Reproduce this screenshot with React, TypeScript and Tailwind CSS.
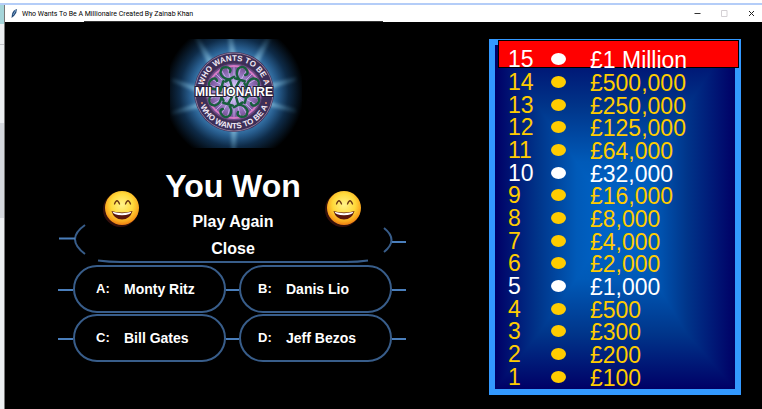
import React from "react";

const prizes = [
  "£1 Million",
  "£500,000",
  "£250,000",
  "£125,000",
  "£64,000",
  "£32,000",
  "£16,000",
  "£8,000",
  "£4,000",
  "£2,000",
  "£1,000",
  "£500",
  "£300",
  "£200",
  "£100",
];

const answers = [
  [
    { letter: "A:", text: "Monty Ritz" },
    { letter: "B:", text: "Danis Lio" },
  ],
  [
    { letter: "C:", text: "Bill Gates" },
    { letter: "D:", text: "Jeff Bezos" },
  ],
];

const petals = [22, 67, 112, 157, 202, 247, 292, 337];
const spokes = [0, 15, 30, 45, 60, 75, 90, 105, 120, 135, 150, 165];

function Logo() {
  return (
    <svg width="132" height="109" viewBox="-64 -53 132 109" role="img" aria-label="Who Wants To Be A Millionaire">
      <defs>
        <radialGradient id="halo" gradientUnits="userSpaceOnUse" cx="0" cy="0" r="70">
          <stop offset="0.5" stopColor="#4488bd" />
          <stop offset="0.64" stopColor="#265a8a" />
          <stop offset="0.78" stopColor="#0e2b48" />
          <stop offset="1" stopColor="#000000" />
        </radialGradient>
        <radialGradient id="ray" gradientUnits="userSpaceOnUse" cx="0" cy="0" r="64">
          <stop offset="0.6" stopColor="#a8dcf0" stopOpacity="0.55" />
          <stop offset="1" stopColor="#5fa6cc" stopOpacity="0.1" />
        </radialGradient>
        <radialGradient id="core">
          <stop offset="0" stopColor="#ffffff" />
          <stop offset="0.35" stopColor="#b9a4e4" />
          <stop offset="0.75" stopColor="#8663ac" />
          <stop offset="1" stopColor="#66457f" />
        </radialGradient>
        <filter id="soft" x="-20%" y="-20%" width="140%" height="140%">
          <feGaussianBlur stdDeviation="1.5" />
        </filter>
        <path id="arcTop" d="M-30.5 7A31.3 31.3 0 1 1 30.5 7" />
        <path id="arcBottom" d="M-36 -6A36.5 36.5 0 1 0 36 -6" />
      </defs>
      <rect x="-64" y="-53" width="132" height="109" fill="url(#halo)" />
      <g fill="url(#ray)" filter="url(#soft)">
        <path d="M-3 -30L-7 -60H-2L3 -30ZM-3 30L-3 62H2L3 30ZM-30 -3L-62 -14V-10L-30 3ZM-30 9L-62 19V23L-28 14ZM30 -7L62 -15V-11L30 -1ZM30 8L62 17V21L30 13ZM18 -30L33 -56L37 -53L24 -28ZM-20 -30L-36 -56L-39 -53L-26 -28Z" />
      </g>
      <circle r="40" fill="#3c2e58" />
      <circle r="39" fill="none" stroke="#8c7795" strokeWidth="1" />
      <circle r="29" fill="url(#core)" />
      <g stroke="#d9c8ff" strokeWidth="0.8" opacity="0.8">
        {spokes.map((a) => (
          <path key={a} d="M0 -26V26" transform={`rotate(${a})`} />
        ))}
      </g>
      <circle r="26" fill="none" stroke="#d77ac4" strokeWidth="2" />
      <circle r="29" fill="none" stroke="#493258" strokeWidth="1" />
      <g fill="none" stroke="#175f3d" strokeWidth="2.4" strokeLinecap="round">
        {petals.map((a) => (
          <path key={a} d="M0 -5L1 -13Q-6 -17 -5 -23Q-2 -29 4 -25Q7 -22 4 -20M-4 -13L6 -14" transform={`rotate(${a})`} />
        ))}
      </g>
      <circle r="5" fill="#d9ffe9" />
      <g fill="#f1eaf5" fontFamily="Liberation Sans, Arial, sans-serif" fontWeight="700" fontSize="8">
        <text textAnchor="middle">
          <textPath href="#arcTop" startOffset="50%">WHO WANTS TO BE A</textPath>
        </text>
        <text textAnchor="middle">
          <textPath href="#arcBottom" startOffset="50%">WHO WANTS TO BE A</textPath>
        </text>
      </g>
      <g fill="#e48a5c">
        <circle cx="-32" cy="-11" r="1" />
        <circle cx="32" cy="-11" r="1" />
        <circle cx="-32" cy="11" r="1" />
        <circle cx="32" cy="11" r="1" />
      </g>
      <text
        y="4"
        textAnchor="middle"
        fill="#ffffff"
        stroke="#241a35"
        strokeWidth="2"
        paintOrder="stroke"
        fontFamily="Liberation Sans, Arial, sans-serif"
        fontWeight="700"
        fontSize="12"
      >
        MILLIONAIRE
      </text>
    </svg>
  );
}

function Emoji() {
  return (
    <svg width="40" height="40" viewBox="-20 -20 40 40" role="img" aria-label="Laughing face">
      <defs>
        <radialGradient id="face" cx="0.5" cy="0.4" r="0.6">
          <stop offset="0" stopColor="#fff38a" />
          <stop offset="0.55" stopColor="#ffd93a" />
          <stop offset="0.85" stopColor="#f9a51c" />
          <stop offset="1" stopColor="#ee7d12" />
        </radialGradient>
      </defs>
      <circle cx="-1.5" cy="1.5" r="17.5" fill="#33100c" />
      <circle r="17" fill="url(#face)" />
      <path d="M-7.5 -4Q-5 -10.5 -2.5 -4M3.5 -4Q6 -10.5 8.5 -4" fill="none" stroke="#6b3712" strokeWidth="1.3" strokeLinecap="round" />
      <path d="M-10.5 3Q0 6 10.5 3Q8 11.5 0 11.5Q-8 11.5 -10.5 3Z" fill="#5a160c" />
      <path d="M-9.5 3.8Q0 6.5 9.5 3.8Q8.5 7 0 7.3Q-8.5 7 -9.5 3.8Z" fill="#ffffff" />
    </svg>
  );
}

function Pill({ letter, text, indent }: { letter: string; text: string; indent: string }) {
  return (
    <button
      type="button"
      className={`flex h-12 w-[153px] items-center rounded-full border-2 border-[#385d8a] text-left font-bold text-white ${indent}`}
    >
      <span className="w-7 text-[13px]">{letter}</span>
      <span className="text-sm">{text}</span>
    </button>
  );
}

function TitleBar() {
  return (
    <header className="relative flex h-[17px] items-center bg-white pl-[6px] pr-[7px]">
      <svg width="7" height="9" viewBox="0 0 7 9" aria-hidden="true">
        <path d="M6 0Q2 1 1 5L0.5 9L3 7Q6 4 6 0Z" fill="#244a78" />
        <path d="M5 1L2 6" stroke="#8fb7dc" strokeWidth="0.8" />
      </svg>
      <h1 className="ml-1 flex-1 whitespace-nowrap font-[Roboto,sans-serif] text-[7px] leading-[10px] text-black">
        Who Wants To Be A Millionaire Created By Zainab Khan
      </h1>
      <div className="flex items-center gap-5">
        <button type="button" aria-label="Minimize" className="flex">
          <svg width="7" height="7" viewBox="0 0 7 7"><path d="M0.5 3.5H6.5" stroke="#333" /></svg>
        </button>
        <button type="button" aria-label="Maximize" className="flex" disabled>
          <svg width="7" height="7" viewBox="0 0 7 7"><path d="M0.5 0.5H6V6.5H0.5Z" fill="none" stroke="#d4d0d4" /></svg>
        </button>
        <button type="button" aria-label="Close window" className="flex">
          <svg width="7" height="7" viewBox="0 0 7 7"><path d="M1 1L6 6M6 1L1 6" stroke="#222" /></svg>
        </button>
      </div>
      <div className="absolute bottom-0 left-[79px] h-px w-[299px] bg-[#333]" />
    </header>
  );
}

function QuestionArea() {
  return (
    <div className="relative flex h-[117px] w-[347px] justify-center pl-[2px] pt-[17px]">
      <svg className="absolute left-0 top-0" width="347" height="117" viewBox="58 148 347 117" fill="none" stroke="#385d8a" strokeWidth="2" aria-hidden="true">
        <path d="M84 225Q64 239 84 254M383 228Q398 240 383 252" />
        <path d="M97 260.5Q108 262 120 262H345Q357 262 367 260.5" />
        <path d="M58 238.5H74M391 242H405" stroke="#4a7ebb" />
      </svg>
      <div className="relative flex w-[262px] items-start justify-between">
        <div className="pt-[23px]"><Emoji /></div>
        <div className="flex flex-col items-center font-bold text-white">
          <h2 className="text-[32px] leading-[43px]">You Won</h2>
          <button type="button" className="text-base leading-[27px]">Play Again</button>
          <button type="button" className="text-base leading-[27px]">Close</button>
        </div>
        <div className="pt-[23px]"><Emoji /></div>
      </div>
    </div>
  );
}

function Ladder() {
  return (
    <div className="relative flex w-[252px] flex-col border-[6px] border-[#3399ff] bg-[linear-gradient(to_right,#000066,#00358a_18%,#005ab8_34%,#0066cc_50%,#005ab8_66%,#00358a_80%,#000066),linear-gradient(to_bottom,#00086a,#00358a_18%,#005ab8_34%,#0066cc_50%,#005ab8_68%,#00358a_84%,#000066)] pb-px pt-[3px] bg-blend-darken">
      <div className="absolute -right-1 -top-[5px] left-[3px] h-7 border border-black bg-[#ff0000]" />
      <ol className="relative flex flex-1 flex-col text-[23px] leading-5">
        {prizes.map((prize, i) => (
          <li
            key={prize}
            className={`grid flex-1 grid-cols-[43px_39px_1fr] items-center pl-[13px] ${i % 5 === 0 ? "text-white" : "text-[#ffcc00]"}`}
          >
            <span>{15 - i}</span>
            <span className="h-3 w-[15px] rounded-[50%] bg-current" />
            <span className="pt-[2px]">{prize}</span>
          </li>
        ))}
      </ol>
    </div>
  );
}

function BackdropEdge() {
  return (
    <div className="flex w-[5px] flex-col border-r border-[#777] bg-[#edf0f2]">
      <div className="h-[19px] bg-[#a5d5da]" />
      <div className="h-[21px] border-b border-[#c3c5c9]" />
      <div className="h-[78px]" />
      <div className="h-[95px] bg-[#d5d8de]" />
    </div>
  );
}

export default function App() {
  return (
    <div className="flex min-h-screen flex-col bg-white pt-[3px] font-['Liberation_Sans',Arial,sans-serif]">
      <div className="h-[2px] bg-[#b4cdf8]" />
      <div className="flex flex-1">
        <BackdropEdge />
        <div className="flex flex-1 flex-col bg-black">
          <TitleBar />
          <main className="flex flex-1 pb-[14px] pr-[21px] pt-[17px]">
            <section className="flex flex-1 flex-col items-center">
              <div className="pl-[7px]"><Logo /></div>
              <QuestionArea />
              <div className="flex flex-col gap-px">
                {answers.map(([left, right]) => (
                  <div key={left.letter} className="flex items-center">
                    <span className="mt-[2px] h-[2px] w-[15px] bg-[#4a7ebb]" />
                    <Pill {...left} indent="pl-[21px]" />
                    <span className="mt-[2px] h-[2px] w-[13px] bg-[#4a7ebb]" />
                    <Pill {...right} indent="pl-[17px]" />
                    <span className="mt-[2px] h-[2px] w-[14px] bg-[#4a7ebb]" />
                  </div>
                ))}
              </div>
            </section>
            <aside className="ml-[30px] flex">
              <Ladder />
            </aside>
          </main>
        </div>
      </div>
    </div>
  );
}
